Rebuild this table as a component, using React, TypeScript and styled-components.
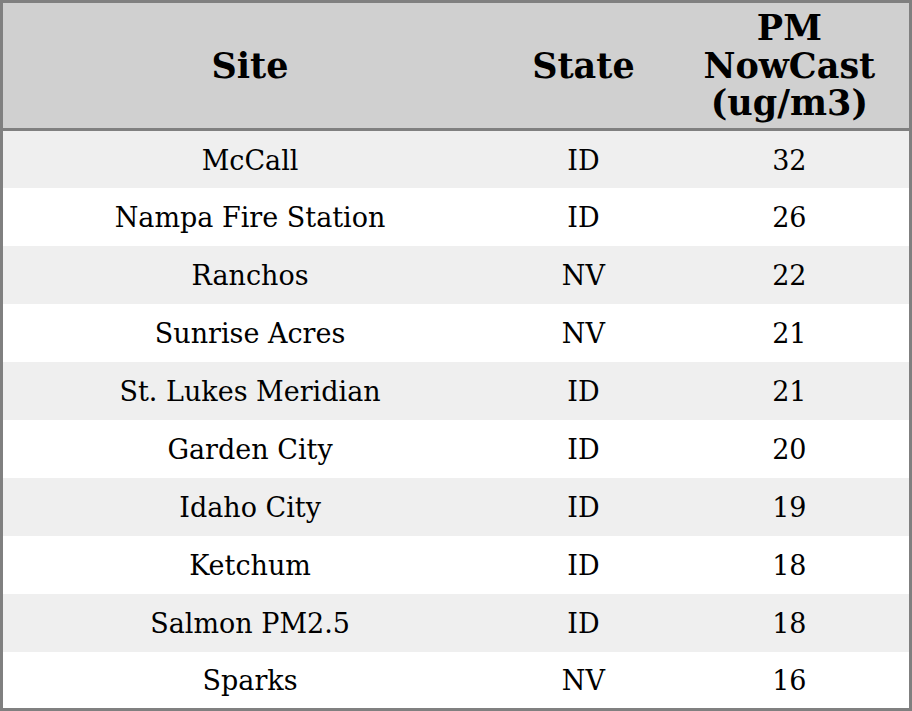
import styled, { createGlobalStyle } from 'styled-components'

const rows = [
  { site: 'McCall', state: 'ID', value: 32 },
  { site: 'Nampa Fire Station', state: 'ID', value: 26 },
  { site: 'Ranchos', state: 'NV', value: 22 },
  { site: 'Sunrise Acres', state: 'NV', value: 21 },
  { site: 'St. Lukes Meridian', state: 'ID', value: 21 },
  { site: 'Garden City', state: 'ID', value: 20 },
  { site: 'Idaho City', state: 'ID', value: 19 },
  { site: 'Ketchum', state: 'ID', value: 18 },
  { site: 'Salmon PM2.5', state: 'ID', value: 18 },
  { site: 'Sparks', state: 'NV', value: 16 },
]

const GlobalStyle = createGlobalStyle`
  html, body {
    margin: 0;
    padding: 0;
    background: #ffffff;
  }
`

const App = () => {
  return (
    <>
      <GlobalStyle />
      <Table>
        <colgroup>
          <col style={{ width: 494 }} />
          <col style={{ width: 172 }} />
          <col style={{ width: 240 }} />
        </colgroup>
        <thead>
          <tr>
            <HeadCell>Site</HeadCell>
            <HeadCell>State</HeadCell>
            <HeadCell>
              PM
              <br />
              NowCast
              <br />
              (ug/m3)
            </HeadCell>
          </tr>
        </thead>
        <tbody>
          {rows.map((r, i) => (
            <Row key={r.site} $shaded={i % 2 === 0}>
              <Cell>{r.site}</Cell>
              <Cell>{r.state}</Cell>
              <Cell>{r.value}</Cell>
            </Row>
          ))}
        </tbody>
      </Table>
    </>
  )
}

const Table = styled.table`
  width: 912px;
  border-collapse: collapse;
  table-layout: fixed;
  border: 3px solid #808080;
  font-family: 'DejaVu Serif', serif;
  color: #000000;
`
const HeadCell = styled.th`
  height: 125px;
  padding: 0;
  background: #d0d0d0;
  border-bottom: 3px solid #808080;
  font-size: 35px;
  font-weight: bold;
  line-height: 37.5px;
  text-align: center;
  vertical-align: middle;
`
const Row = styled.tr<{ $shaded: boolean }>`
  height: 58px;
  background: ${(p) => (p.$shaded ? '#efefef' : '#ffffff')};
`
const Cell = styled.td`
  padding: 3px 0 0;
  font-size: 27px;
  line-height: 32px;
  text-align: center;
  vertical-align: middle;
`

export default App
